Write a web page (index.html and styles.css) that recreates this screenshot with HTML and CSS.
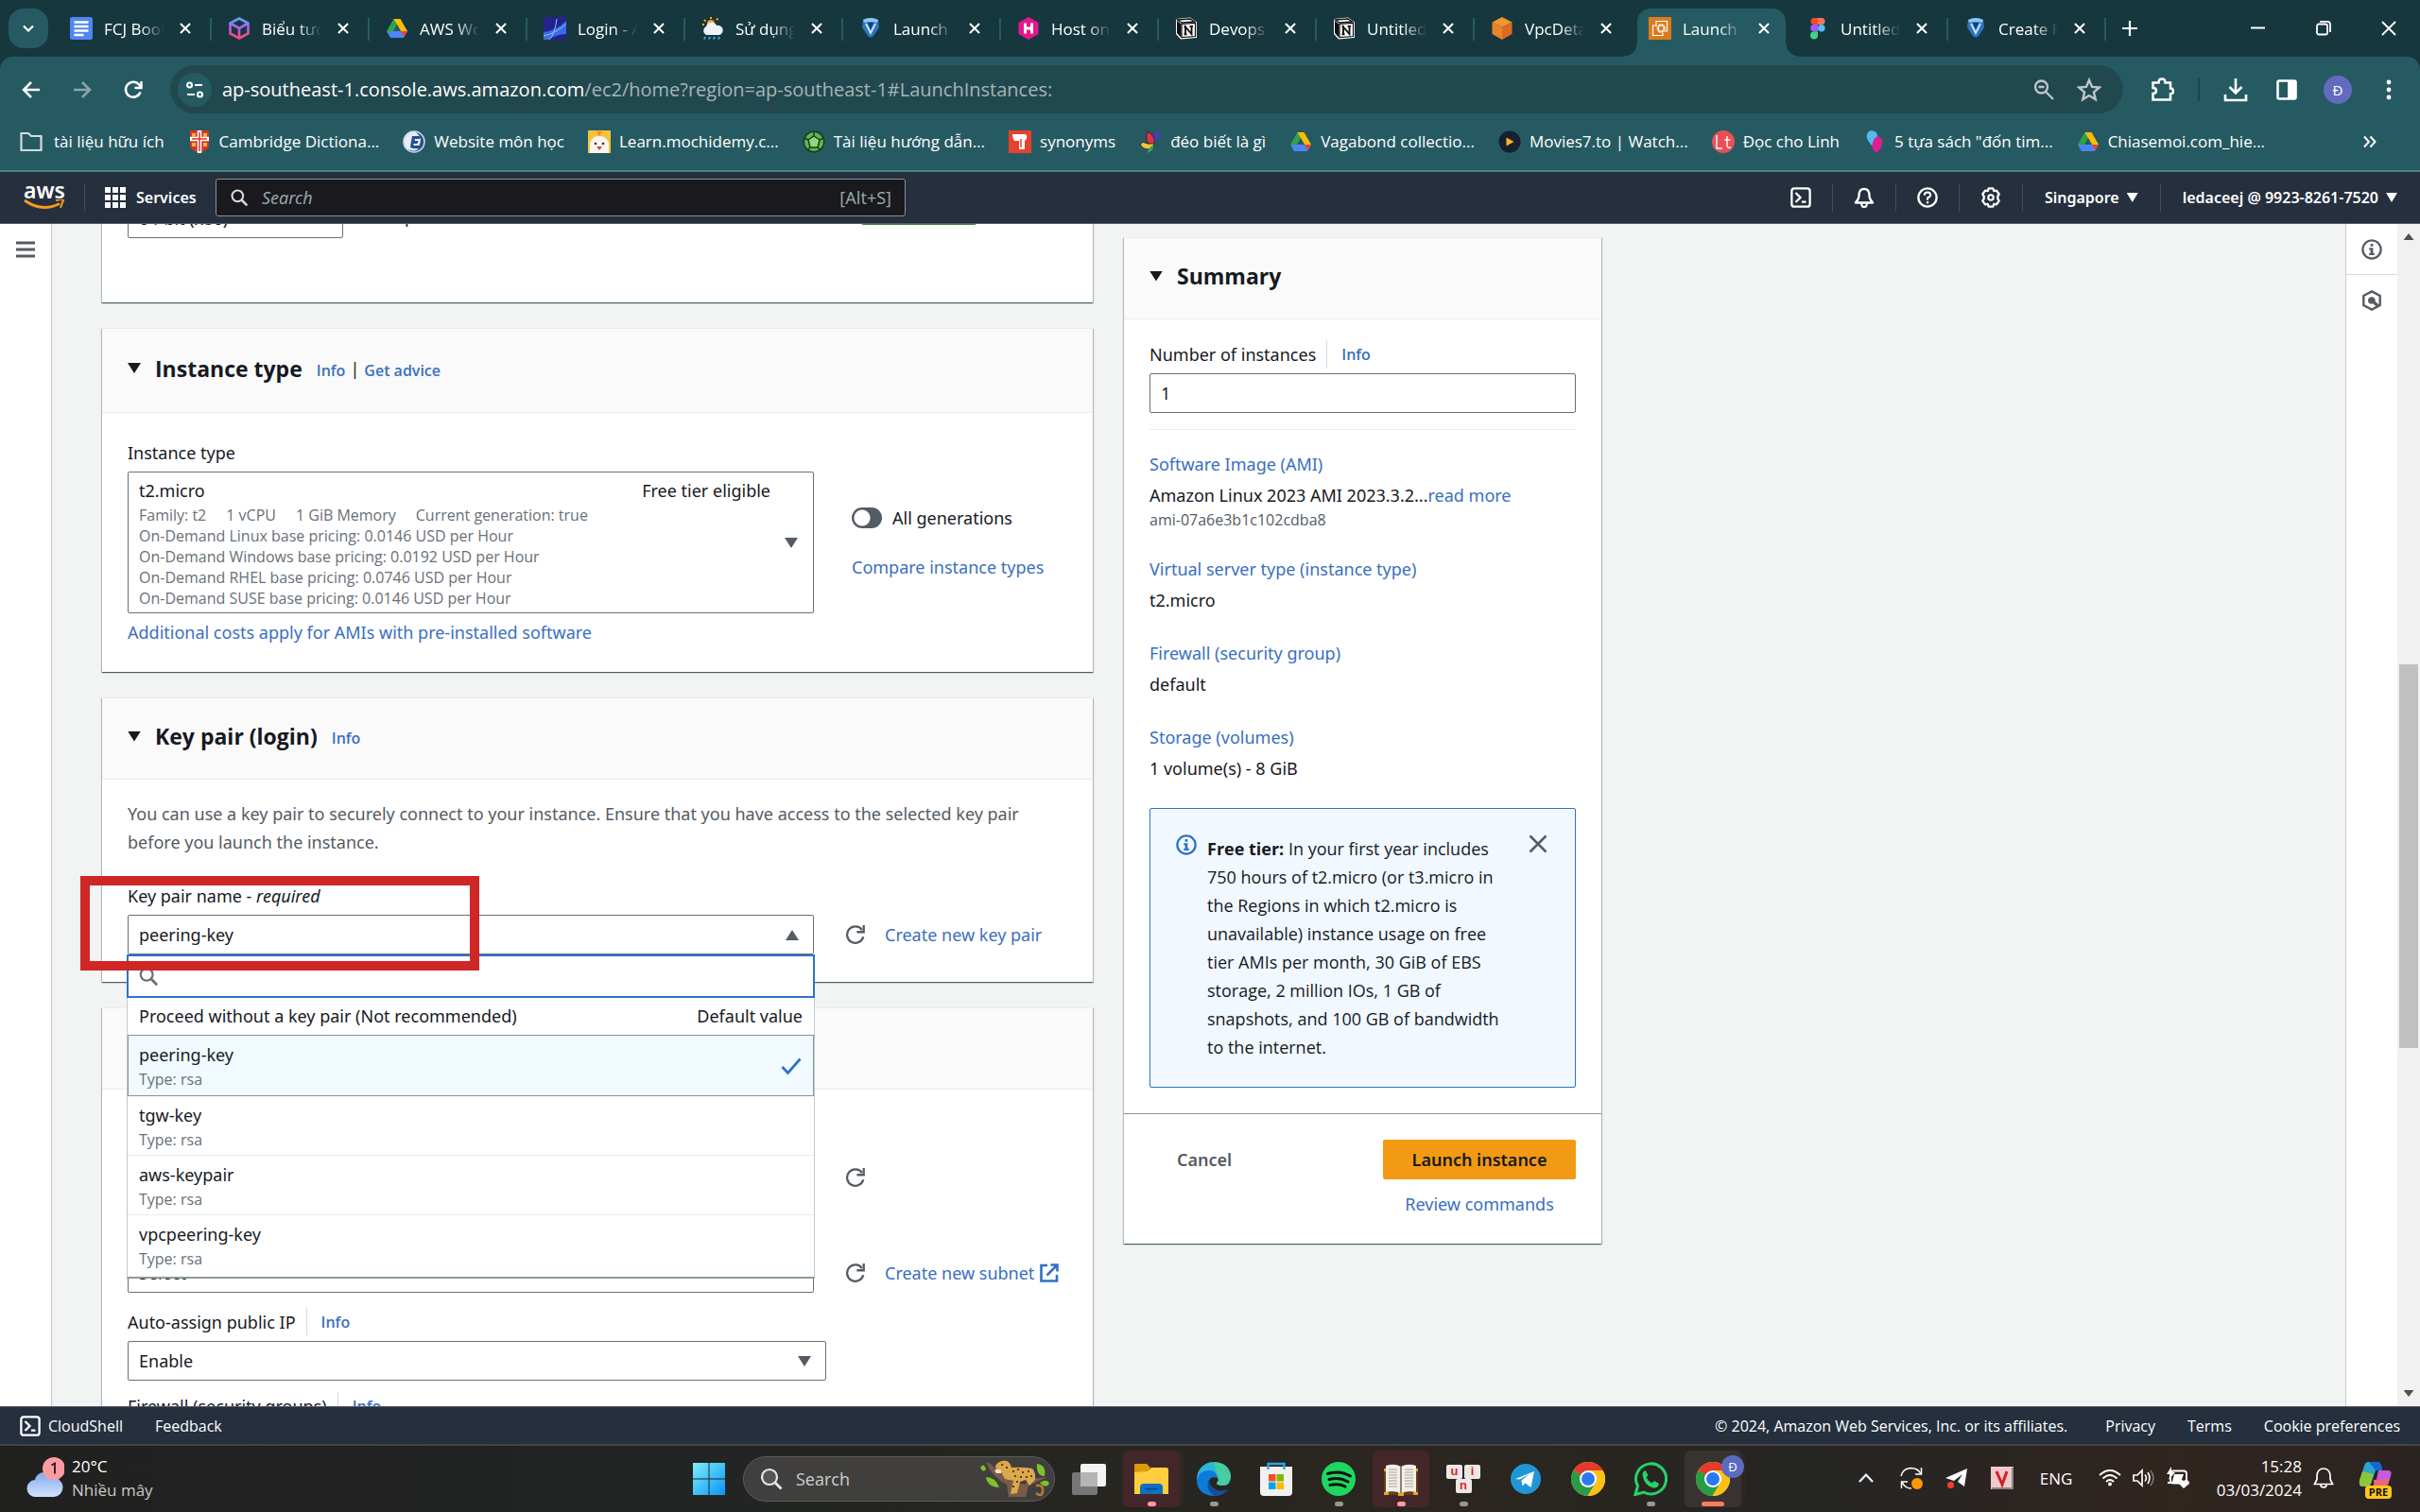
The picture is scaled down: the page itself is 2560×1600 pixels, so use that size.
FILE: index.html
```html
<!DOCTYPE html>
<html lang="en">
<head>
<meta charset="utf-8">
<title>Launch an instance | EC2</title>
<link rel="stylesheet" href="styles.css">
</head>
<body>
<svg class="sprite" aria-hidden="true">
  <symbol id="x" viewBox="0 0 24 24"><path d="M6.500 6.500l11 11m0-11l-11 11" stroke="currentColor" stroke-width="2.200" fill="none"/></symbol>
  <symbol id="glass" viewBox="0 0 24 24"><circle cx="10" cy="10" r="7" fill="none" stroke="currentColor" stroke-width="2.500"/><path d="M15 15l7 7" stroke="currentColor" stroke-width="3"/></symbol>
  <symbol id="refresh" viewBox="0 0 24 24"><path d="M21 14.500A9.500 9.500 0 1 1 19.500 6.500" fill="none" stroke="currentColor" stroke-width="2.500"/><path d="M21.500 1v8h-8" fill="none" stroke="currentColor" stroke-width="2.500"/></symbol>
  <symbol id="info" viewBox="0 0 24 24"><circle cx="12" cy="12" r="10.500" fill="none" stroke="currentColor" stroke-width="2.500"/><path d="M10.500 5.500h3v3h-3zM9 10h4.500v6H15v2.500H9V16h1.500v-3.500H9z" fill="currentColor"/></symbol>
  <symbol id="shell" viewBox="0 0 24 24"><rect x="1.500" y="1.500" width="21" height="21" rx="3" fill="none" stroke="currentColor" stroke-width="2.500"/><path d="M6 6.500l5.500 5.500L6 17.500M13 17h5" fill="none" stroke="currentColor" stroke-width="2.500"/></symbol>
  <symbol id="drive" viewBox="0 0 24 24"><path d="M8.500 2h7L12 8 5 21 1 15z" fill="#2fa24c"/><path d="M8.500 2h7L23 15h-7z" fill="#fbbc05"/><path d="M5 15h18l-4 7H5l-3.500-6z" fill="#4a86f7"/><path d="M16 15h7l-3.500 6z" fill="#e94235"/><path d="M12 8.500L15.500 15h-7z" fill="#25595f"/></symbol>
  <symbol id="vcube" viewBox="0 0 24 24"><path d="M4 3q8-4 16 0l1 8-6 9q-3 3-6 0L3 11z" fill="#2f74bd"/><path d="M4 3q8-4 16 0l-1 3q-7-2-14 0z" fill="#8cc7f5"/><path d="M7 7l5 10 5-10" fill="none" stroke="#cfe8ff" stroke-width="1.800"/><path d="M9 6l3 7 3-7z" fill="#153f78"/></symbol>
  <symbol id="notion" viewBox="0 0 24 24"><path d="M1 2l15-1.500 7 5V22L6 23.500 1 18z" fill="#fff"/><path d="M2.500 3L16 2l4.500 3L7 6z" fill="#fff" stroke="#111" stroke-width="1.300"/><path d="M2 4l4.500 3.500V22L2 17z" fill="#111"/><path d="M7 7.300L21.500 6.300V20.500L7 21.500z" fill="#fff" stroke="#111" stroke-width="1.200"/><path d="M11 18v-7.500l6.500 7.500v-8M9.500 10.300h2.500M15.500 9.900h3.500M9.500 18.300h3" fill="none" stroke="#111" stroke-width="1.900"/></symbol>
  <symbol id="chrome" viewBox="0 0 36 36"><circle cx="18" cy="18" r="18" fill="#fbc116"/><path d="M18 18L2.400 9A18 18 0 0 1 33.600 9z" fill="#e33b2e"/><path d="M18 18L2.400 9A18 18 0 0 0 17.500 36L26 22z" fill="#2a9b48"/><path d="M18 9h15.600A18 18 0 0 1 17.500 36L26 22z" fill="#fbc116"/><circle cx="18" cy="18" r="9" fill="#fff"/><circle cx="18" cy="18" r="7" fill="#2b79ee"/></symbol>
</svg>

<header class="browser">
  <div class="tabstrip">
    <button class="tab-search" aria-label="Search tabs"><svg width="14" height="14" viewBox="0 0 14 14"><path d="M2 4.500l5 5 5-5" fill="none" stroke="#fff" stroke-width="2.200"/></svg></button>
    <nav class="tabs" aria-label="Tabs">
      <div class="tab"><svg class="fav" viewBox="0 0 24 24"><rect width="24" height="24" rx="2.500" fill="#5086f2"/><path d="M4.500 5.500h15M4.500 10h15M4.500 14.500h15M4.500 19h10" stroke="#fff" stroke-width="2.400"/></svg><span class="tab-title">FCJ Book</span><button class="tab-x" aria-label="Close"><svg class="i22"><use href="#x"/></svg></button></div>
      <div class="tab"><svg class="fav" viewBox="0 0 24 24"><defs><linearGradient id="hx" x1="0" y1="0" x2="0" y2="1"><stop offset="0" stop-color="#56a8ff"/><stop offset=".5" stop-color="#b65be8"/><stop offset="1" stop-color="#ff4a6d"/></linearGradient></defs><path d="M12 1.500l9.500 5v11L12 22.500l-9.500-5v-11zM2.500 6.500L12 12l9.500-5.500M12 12v10.500" fill="none" stroke="url(#hx)" stroke-width="2.600"/></svg><span class="tab-title">Biểu tượng</span><button class="tab-x" aria-label="Close"><svg class="i22"><use href="#x"/></svg></button></div>
      <div class="tab"><svg class="fav"><use href="#drive"/></svg><span class="tab-title">AWS Work</span><button class="tab-x" aria-label="Close"><svg class="i22"><use href="#x"/></svg></button></div>
      <div class="tab"><svg class="fav" viewBox="0 0 24 24"><path d="M0 0h24v24H0z" fill="#24228c"/><path d="M0 16Q14 14 24 4v14Q14 18 5 24H0z" fill="#3c6be0"/><path d="M0 20Q14 17 24 7M6 24Q12 18 14 2" fill="none" stroke="#8fc3ff" stroke-width="1"/></svg><span class="tab-title">Login - A</span><button class="tab-x" aria-label="Close"><svg class="i22"><use href="#x"/></svg></button></div>
      <div class="tab"><svg class="fav" viewBox="0 0 24 24"><circle cx="10" cy="7" r="4" fill="#f7a928"/><path d="M10 0v2M3 3l1.500 1.500M1 8h2M16 3l1.500-1.500" stroke="#f7a928" stroke-width="2"/><path d="M5 19a5 5 0 0 1 0-9 6 6 0 0 1 11-1 5 5 0 0 1 3 10z" fill="#eef3f8"/><path d="M4 21l-1 2.500M9 21l-1 2.500M14 21l-1 2.500M19 21l-1 2.500" stroke="#4ba3f0" stroke-width="2"/></svg><span class="tab-title">Sử dụng</span><button class="tab-x" aria-label="Close"><svg class="i22"><use href="#x"/></svg></button></div>
      <div class="tab"><svg class="fav"><use href="#vcube"/></svg><span class="tab-title">Launch a</span><button class="tab-x" aria-label="Close"><svg class="i22"><use href="#x"/></svg></button></div>
      <div class="tab"><svg class="fav" viewBox="0 0 24 24"><path d="M12 0l10.500 6v12L12 24 1.500 18V6z" fill="#e6168b"/><path d="M8.500 6.500v11M15.500 6.500v11M8.500 12h7" stroke="#fff" stroke-width="2.800"/></svg><span class="tab-title">Host on A</span><button class="tab-x" aria-label="Close"><svg class="i22"><use href="#x"/></svg></button></div>
      <div class="tab"><svg class="fav"><use href="#notion"/></svg><span class="tab-title">Devops 1</span><button class="tab-x" aria-label="Close"><svg class="i22"><use href="#x"/></svg></button></div>
      <div class="tab"><svg class="fav"><use href="#notion"/></svg><span class="tab-title">Untitled</span><button class="tab-x" aria-label="Close"><svg class="i22"><use href="#x"/></svg></button></div>
      <div class="tab no-sep"><svg class="fav" viewBox="0 0 24 24"><path d="M12 0l10.500 5.500L12 11 1.500 5.500z" fill="#f0962e"/><path d="M1.500 5.500L12 11v13L1.500 18z" fill="#e9842a"/><path d="M22.500 5.500L12 11v13l10.500-6z" fill="#dc6a22"/></svg><span class="tab-title">VpcDetail</span><button class="tab-x" aria-label="Close"><svg class="i22"><use href="#x"/></svg></button></div>
      <div class="tab active"><svg class="fav" viewBox="0 0 24 24"><path d="M0 0h24v24H0z" fill="#dd7a1c"/><rect x="10.500" y="9" width="5.500" height="6" fill="none" stroke="#fff" stroke-width="1.200"/><path d="M12 7v2M14.500 7v2M12 15v2M14.500 15v2M8.500 11h2M8.500 13h2M16 11h2M16 13h2M8 10V4.500h11.500V15H17M8 9H4.500v10.500H15V17" fill="none" stroke="#fff" stroke-width="1.200"/></svg><span class="tab-title">Launch a</span><button class="tab-x" aria-label="Close"><svg class="i22"><use href="#x"/></svg></button></div>
      <div class="tab"><svg class="fav" viewBox="0 0 24 24"><path d="M8 1h4v7H8a3.500 3.500 0 0 1 0-7z" fill="#f24e1e"/><path d="M12 1h4a3.500 3.500 0 0 1 0 7h-4z" fill="#ff7262"/><path d="M8 8h4v7.500H8A3.700 3.700 0 0 1 8 8z" fill="#a259ff"/><circle cx="15.800" cy="11.700" r="3.800" fill="#5cb8f5"/><path d="M8 15.500h4v4a4 4 0 1 1-4-4z" fill="#43d184"/></svg><span class="tab-title">Untitled</span><button class="tab-x" aria-label="Close"><svg class="i22"><use href="#x"/></svg></button></div>
      <div class="tab"><svg class="fav"><use href="#vcube"/></svg><span class="tab-title">Create P</span><button class="tab-x" aria-label="Close"><svg class="i22"><use href="#x"/></svg></button></div>
    </nav>
    <button class="new-tab" aria-label="New tab"><svg width="18" height="18" viewBox="0 0 18 18"><path d="M9 1v16M1 9h16" stroke="#fff" stroke-width="2.200"/></svg></button>
    <div class="win-controls">
      <button aria-label="Minimize"><svg width="18" height="18" viewBox="0 0 18 18"><path d="M1 8.500h15" stroke="#fff" stroke-width="2"/></svg></button>
      <button aria-label="Restore"><svg width="18" height="18" viewBox="0 0 18 18"><rect x="2" y="4.500" width="11" height="11" rx="2" fill="none" stroke="#fff" stroke-width="1.800"/><path d="M5 1.800h8q3 0 3 3V13" fill="none" stroke="#fff" stroke-width="1.800"/></svg></button>
      <button aria-label="Close window"><svg width="18" height="18" viewBox="0 0 18 18"><path d="M2 2l14 14M16 2L2 16" stroke="#fff" stroke-width="1.800"/></svg></button>
    </div>
  </div>

  <div class="toolbar">
    <div class="nav-buttons">
      <button aria-label="Back"><svg class="i24" viewBox="0 0 24 24"><path d="M21 12H4M12 4l-8 8 8 8" fill="none" stroke="#fff" stroke-width="2.500"/></svg></button>
      <button aria-label="Forward"><svg class="i24" viewBox="0 0 24 24"><path d="M3 12h17M12 4l8 8-8 8" fill="none" stroke="#8aa5a9" stroke-width="2.500"/></svg></button>
      <button aria-label="Reload"><svg class="i24" viewBox="0 0 24 24"><path d="M19.500 14.500A8 8 0 1 1 18 6.500L20 9" fill="none" stroke="#fff" stroke-width="2.500"/><path d="M20.500 3v7h-7" fill="none" stroke="#fff" stroke-width="2.500"/></svg></button>
    </div>
    <div class="omnibox">
      <span class="site-info"><svg width="20" height="20" viewBox="0 0 20 20"><g fill="none" stroke="#fff" stroke-width="2.200"><circle cx="4.500" cy="5" r="2.500"/><path d="M10 5h8M2 15h8"/><circle cx="15.500" cy="15" r="2.500"/></g></svg></span>
      <a class="url" href="#"><b>ap-southeast-1.console.aws.amazon.com</b>/ec2/home?region=ap-southeast-1#LaunchInstances:</a>
      <svg class="i24" viewBox="0 0 24 24"><g fill="none" stroke="#bfc7c8" stroke-width="2.300"><circle cx="9.500" cy="9" r="6.500"/><path d="M14 14l8 8M6.500 9h6"/></g></svg>
      <svg class="star" viewBox="0 0 24 24"><path d="M12 2.500l2.800 6.600 7.200.6-5.500 4.700 1.700 7-6.200-3.800-6.200 3.800 1.700-7L2 9.700l7.200-.6z" fill="none" stroke="#bfc7c8" stroke-width="2.200"/></svg>
    </div>
    <button class="ext" aria-label="Extensions"><svg class="i26" viewBox="0 0 26 26"><path d="M3.500 5.500h6q0-4 3.500-4t3.500 4h5.500v6q3 0 3 3t-3 3v6h-18.500v-6.500q3.500 0 3.500-3t-3.500-3z" fill="none" stroke="#fff" stroke-width="2.500"/></svg></button>
    <span class="tool-sep"></span>
    <button class="dl" aria-label="Downloads"><svg class="i26" viewBox="0 0 26 26"><path d="M13 1v15M6.500 10l6.500 6.500 6.500-6.500M2 18v6h22v-6" fill="none" stroke="#fff" stroke-width="2.600"/></svg></button>
    <button class="sp" aria-label="Side panel"><svg class="i26" viewBox="0 0 26 26"><rect x="3.500" y="3.500" width="19" height="19" rx="1.500" fill="none" stroke="#fff" stroke-width="2.600"/><path d="M14 3h9v20h-9z" fill="#fff"/></svg></button>
    <button class="avatar" aria-label="Profile">Đ</button>
    <button class="more" aria-label="Menu"><svg width="6" height="24" viewBox="0 0 6 24"><g fill="#fff"><circle cx="3" cy="4" r="2.400"/><circle cx="3" cy="12" r="2.400"/><circle cx="3" cy="20" r="2.400"/></g></svg></button>
  </div>

  <nav class="bookmarks" aria-label="Bookmarks">
    <a href="#"><svg class="i24" viewBox="0 0 24 24"><path d="M1.500 3h7.500l3 3h10.500v15h-21z" fill="none" stroke="#d2dcdd" stroke-width="2.200"/></svg>tài liệu hữu ích</a>
    <a href="#"><svg class="i24" viewBox="0 0 24 24"><path d="M2 0h20v15q0 6-10 9Q2 21 2 15z" fill="#d8342b"/><path d="M12 0v24M2 9h20" stroke="#fff" stroke-width="4.500"/><path d="M12 2v20M4 9h16" stroke="#d8342b" stroke-width="1.500"/><path d="M4 3h4v4H4zM16 3h4v4h-4zM4 13h4v4H4zM16 13h4v4h-4z" fill="#f3b63a"/></svg>Cambridge Dictiona...</a>
    <a href="#"><svg class="i24" viewBox="0 0 24 24"><circle cx="12" cy="12" r="11" fill="#e6edf6"/><path d="M12 1a11 11 0 1 1-8 18.500Q14 24 17 19 8 20 8 17L10 6h9l-1 3h-5l-.5 2h4l-1 3h-4v2h6Q22 6 12 1z" fill="#24508f"/><circle cx="12" cy="12" r="11" fill="none" stroke="#c9d8ea" stroke-width="1.500"/></svg>Website môn học</a>
    <a href="#"><svg class="i24" viewBox="0 0 24 24"><path d="M0 0h24v24H0z" fill="#f6c33b"/><path d="M2 24V14q2-8 10-8t10 8v10z" fill="#fdf6ee"/><circle cx="8" cy="14" r="1.300" fill="#3a2a20"/><circle cx="16" cy="14" r="1.300" fill="#3a2a20"/><path d="M9 17h6l-3 4z" fill="#c94d3c"/><path d="M9 1h6l-3 5z" fill="#ef8b2c"/></svg>Learn.mochidemy.c...</a>
    <a href="#"><svg class="i24" viewBox="0 0 24 24"><circle cx="12" cy="12" r="11.500" fill="#1d3b1c"/><circle cx="12" cy="12" r="10" fill="#58b94c"/><path d="M12 6l6 4-2 8H8l-2-8z" fill="#93d785" stroke="#1d3b1c" stroke-width="1.500"/><path d="M12 6V2M18 10l4-2M16 18l3 3M8 18l-3 3M6 10L2 8" stroke="#1d3b1c" stroke-width="1.500"/></svg>Tài liệu hướng dẫn...</a>
    <a href="#"><svg class="i24" viewBox="0 0 24 24"><path d="M0 0h24v24H0z" fill="#e5432d"/><path d="M4 4h14q3 4-1 7v9h-6v-9H6q-2-3-2-7z" fill="#fff"/><path d="M13 9v9" stroke="#e5432d" stroke-width="1.500"/></svg>synonyms</a>
    <a href="#"><svg class="i24" viewBox="0 0 24 24"><path d="M23 1q-2 9-6 11l-4-1q0-7 4-8z" fill="#493cb8"/><path d="M9 1q9 5 7 14l-4 1Q5 10 9 1z" fill="#df3340" stroke="#2b2b2b"/><path d="M1 14q3-3 8 0l7 0q0 5-6 6-7 0-9-6z" fill="#f4c23a" stroke="#2b2b2b"/><path d="M15 15q2 5-6 9 0-5 6-9z" fill="#35a35a"/></svg>đéo biết là gì</a>
    <a href="#"><svg class="i24"><use href="#drive"/></svg>Vagabond collectio...</a>
    <a href="#"><svg class="i24" viewBox="0 0 24 24"><circle cx="12" cy="12" r="11.500" fill="#16202e"/><path d="M8.500 7.500l8 4.500-8 4.500z" fill="#f6b81f"/></svg>Movies7.to | Watch...</a>
    <a href="#"><svg class="i24" viewBox="0 0 24 24"><circle cx="12" cy="12" r="12" fill="#ea4f55"/><path d="M5 5v14h6M16 6v10q0 3 4 2M13.500 10h6" fill="none" stroke="#fff" stroke-width="1.400"/></svg>Đọc cho Linh</a>
    <a href="#"><svg class="i24" viewBox="0 0 24 24"><path d="M9 0q7 1 6 8t-6 8Q2 8 4 4t5-4z" fill="#55b8ec"/><path d="M16 6q6 3 4 9t-6 9q-6-5-4-11t6-7z" fill="#dd1d92"/></svg>5 tựa sách "đốn tim...</a>
    <a href="#"><svg class="i24"><use href="#drive"/></svg>Chiasemoi.com_hie...</a>
    <button class="overflow" aria-label="More bookmarks"><svg width="16" height="16" viewBox="0 0 16 16"><path d="M2 2.500l5 5.500-5 5.500M8.500 2.500l5 5.500-5 5.500" fill="none" stroke="#fff" stroke-width="2"/></svg></button>
  </nav>
</header>

<header class="aws-nav">
  <a class="aws-logo" href="#" aria-label="AWS"><span>aws</span><svg width="44" height="12" viewBox="0 0 44 12"><path d="M1 1q18 13 37 3.500" fill="none" stroke="#f79b1b" stroke-width="3"/><path d="M34 1q9-2 8 0t-3 8" fill="none" stroke="#f79b1b" stroke-width="2"/></svg></a>
  <button class="services"><svg class="i22" viewBox="0 0 22 22"><path d="M0 0h6v6H0zM8 0h6v6H8zM16 0h6v6h-6zM0 8h6v6H0zM8 8h6v6H8zM16 8h6v6h-6zM0 16h6v6H0zM8 16h6v6H8zM16 16h6v6h-6z" fill="#fff"/></svg>Services</button>
  <label class="aws-search"><svg class="i20"><use href="#glass"/></svg><input type="search" placeholder="Search" aria-label="Search"><span>[Alt+S]</span></label>
  <div class="aws-tools">
    <button class="tool" aria-label="CloudShell"><svg class="i22"><use href="#shell"/></svg></button>
    <button class="tool" aria-label="Notifications"><svg class="i22" viewBox="0 0 24 24"><path d="M2 18q4-4 4-8 0-8 6-8t6 8q0 4 4 8z" fill="none" stroke="#fff" stroke-width="2.500" stroke-linejoin="round"/><path d="M9 18v2q0 3 3 3t3-3v-2" fill="none" stroke="#fff" stroke-width="2.300"/></svg></button>
    <button class="tool" aria-label="Help"><svg class="i22" viewBox="0 0 24 24"><circle cx="12" cy="12" r="10.500" fill="none" stroke="#fff" stroke-width="2.500"/><path d="M8.500 9.500q0-3.500 3.500-3.500t3.500 3q0 2-3.500 3.500V15" fill="none" stroke="#fff" stroke-width="2.300"/><path d="M10.800 16.500h2.500V19h-2.500z" fill="#fff"/></svg></button>
    <button class="tool" aria-label="Settings"><svg class="i22" viewBox="0 0 24 24"><path d="M9.500 1.500h5l1 3 3-.5 3 4-1.500 2.500v3l1.500 2.500-3 4-3-.5-1 3h-5l-1-3-3 .5-3-4L4 13.500v-3L2.500 8l3-4 3 .5z" fill="none" stroke="#fff" stroke-width="2.500" stroke-linejoin="round"/><circle cx="12" cy="12" r="3" fill="none" stroke="#fff" stroke-width="2.300"/></svg></button>
    <button class="menu">Singapore<i class="tri white"></i></button>
    <button class="menu account">ledaceej @ 9923-8261-7520<i class="tri white"></i></button>
  </div>
</header>

<main class="console">
  <aside class="rail left"><button aria-label="Open menu"><svg width="20" height="18" viewBox="0 0 20 18"><path d="M0 2h20M0 9h20M0 16h20" stroke="#545b64" stroke-width="3"/></svg></button></aside>

  <div class="content">
    <div class="forms">
      <section class="panel arch">
        <div class="select arch-select"><select aria-label="Architecture"><option>64-bit (x86)</option></select></div>
        <span class="boot">uefi-preferred</span>
        <span class="verified"></span>
      </section>

      <section class="panel">
        <header class="panel-head tall"><i class="tri"></i><h2>Instance type</h2><a class="info" href="#">Info</a><span class="bar">|</span><a class="info" href="#">Get advice</a></header>
        <div class="panel-body type-body">
          <div class="type-field">
            <span class="label" id="type-label">Instance type</span>
            <button class="type-select" aria-labelledby="type-label">
              <span class="type-main"><span>t2.micro</span><span>Free tier eligible</span></span>
              <span class="type-tags"><span>Family: t2</span><span>1 vCPU</span><span>1 GiB Memory</span><span>Current generation: true</span></span>
              <span class="small">On-Demand Linux base pricing: 0.0146 USD per Hour</span>
              <span class="small">On-Demand Windows base pricing: 0.0192 USD per Hour</span>
              <span class="small">On-Demand RHEL base pricing: 0.0746 USD per Hour</span>
              <span class="small">On-Demand SUSE base pricing: 0.0146 USD per Hour</span>
              <i class="tri grey"></i>
            </button>
            <a class="link" href="#">Additional costs apply for AMIs with pre-installed software</a>
          </div>
          <div class="type-side">
            <label class="toggle"><input type="checkbox">All generations</label>
            <a class="link" href="#">Compare instance types</a>
          </div>
        </div>
      </section>

      <section class="panel">
        <header class="panel-head"><i class="tri"></i><h2>Key pair (login)</h2><a class="info" href="#">Info</a></header>
        <div class="panel-body key-body">
          <p class="desc">You can use a key pair to securely connect to your instance. Ensure that you have access to the selected key pair before you launch the instance.</p>
          <label class="label" for="keypair">Key pair name - <em>required</em></label>
          <div class="row">
            <div class="select open">
              <select id="keypair"><option>peering-key</option></select>
              <div class="dropdown">
                <label class="filter"><svg class="i22"><use href="#glass"/></svg><input type="text" aria-label="Filter key pairs"></label>
                <ul>
                  <li class="none"><span>Proceed without a key pair (Not recommended)</span><span>Default value</span></li>
                  <li class="chosen"><span>peering-key</span><span class="small">Type: rsa</span><svg class="check" viewBox="0 0 22 22"><path d="M1.500 12l6 6.500L20.500 3.500" fill="none" stroke="#2f72c4" stroke-width="2.800"/></svg></li>
                  <li><span>tgw-key</span><span class="small">Type: rsa</span></li>
                  <li><span>aws-keypair</span><span class="small">Type: rsa</span></li>
                  <li><span>vpcpeering-key</span><span class="small">Type: rsa</span></li>
                </ul>
              </div>
              <div class="callout"></div>
            </div>
            <button class="reload" aria-label="Refresh key pairs"><svg class="i22"><use href="#refresh"/></svg></button>
            <a class="link" href="#">Create new key pair</a>
          </div>
        </div>
      </section>

      <section class="panel">
        <header class="panel-head"></header>
        <div class="panel-body net-body">
          <div class="row">
            <div class="select"><select aria-label="VPC"><option>Select</option></select></div>
            <button class="reload" aria-label="Refresh VPCs"><svg class="i22"><use href="#refresh"/></svg></button>
          </div>
          <div class="row subnet">
            <div class="select"><select aria-label="Subnet"><option>Select</option></select></div>
            <button class="reload" aria-label="Refresh subnets"><svg class="i22"><use href="#refresh"/></svg></button>
            <a class="link ext-link" href="#">Create new subnet<svg class="i20" viewBox="0 0 20 20"><path d="M8 2H1.500v16.500H18V12M11.500 1.500h7v7M18 2L7.500 12.500" fill="none" stroke="#2f72c4" stroke-width="2.600"/></svg></a>
          </div>
          <div class="label-row"><label class="label" for="autoip">Auto-assign public IP</label><a class="info" href="#">Info</a></div>
          <div class="select wide"><select id="autoip"><option>Enable</option></select></div>
          <div class="label-row firewall"><span class="label">Firewall (security groups)</span><a class="info" href="#">Info</a></div>
        </div>
      </section>
    </div>

    <section class="panel summary">
      <header class="panel-head"><i class="tri"></i><h2>Summary</h2></header>
      <div class="summary-body">
        <div class="label-row"><label class="label" for="count">Number of instances</label><a class="info" href="#">Info</a></div>
        <input class="count" id="count" type="text" value="1">
        <hr>
        <dl>
          <dt><a class="link" href="#">Software Image (AMI)</a></dt>
          <dd>Amazon Linux 2023 AMI 2023.3.2...<a class="link" href="#">read more</a></dd>
          <dd class="ami">ami-07a6e3b1c102cdba8</dd>
          <dt><a class="link" href="#">Virtual server type (instance type)</a></dt>
          <dd>t2.micro</dd>
          <dt><a class="link" href="#">Firewall (security group)</a></dt>
          <dd>default</dd>
          <dt><a class="link" href="#">Storage (volumes)</a></dt>
          <dd>1 volume(s) - 8 GiB</dd>
        </dl>
        <div class="alert">
          <svg class="i22 blue"><use href="#info"/></svg>
          <p><b>Free tier:</b> In your first year includes 750 hours of t2.micro (or t3.micro in the Regions in which t2.micro is unavailable) instance usage on free tier AMIs per month, 30 GiB of EBS storage, 2 million IOs, 1 GB of snapshots, and 100 GB of bandwidth to the internet.</p>
          <button aria-label="Dismiss"><svg width="20" height="20" viewBox="0 0 20 20"><path d="M1.500 1.500l17 17m0-17l-17 17" stroke="#545b64" stroke-width="2.500"/></svg></button>
        </div>
      </div>
      <footer class="actions">
        <button class="cancel">Cancel</button>
        <div><button class="launch">Launch instance</button><a class="link" href="#">Review commands</a></div>
      </footer>
    </section>
  </div>

  <aside class="rail right">
    <button aria-label="Info"><svg class="i22"><use href="#info"/></svg></button>
    <button aria-label="Tutorials"><svg class="i22" viewBox="0 0 24 24"><path d="M12 1.500l9.500 5v11l-9.500 5-9.500-5v-11z" fill="none" stroke="#545b64" stroke-width="2.600"/><path d="M12 8a4 4 0 1 0 1.500 7.500l5 5 2.500-3-5-4.500A4 4 0 0 0 12 8z" fill="#545b64"/></svg></button>
  </aside>
  <div class="scrollbar"><i class="arrow up"></i><i class="thumb"></i><i class="arrow down"></i></div>
</main>

<footer class="aws-footer">
  <button><svg class="i22"><use href="#shell"/></svg>CloudShell</button>
  <button class="feedback">Feedback</button>
  <span class="copy">© 2024, Amazon Web Services, Inc. or its affiliates.</span>
  <a href="#">Privacy</a><a href="#">Terms</a><a href="#">Cookie preferences</a>
</footer>

<footer class="taskbar">
  <div class="weather">
    <svg width="40" height="46" viewBox="0 0 40 46"><defs><linearGradient id="cl" x1="0" y1="0" x2="0" y2="1"><stop offset="0" stop-color="#7fa8ee"/><stop offset="1" stop-color="#d4e4ff"/></linearGradient></defs><circle cx="28" cy="20" r="8" fill="#f28a1c"/><path d="M10 43a9 9 0 0 1-1-18 10 10 0 0 1 19-2 10 10 0 0 1 1 20z" fill="url(#cl)"/><circle cx="29" cy="13" r="12" fill="#ff9aa2"/><path d="M26.500 9.500L30 7.500v11" fill="none" stroke="#231a1c" stroke-width="1.800"/></svg>
    <span>20°C<br><small>Nhiều mây</small></span>
  </div>
  <div class="apps">
    <button class="app" aria-label="Start"><svg class="i36" viewBox="0 0 36 36"><defs><linearGradient id="wn" x1="0" y1="0" x2="1" y2="1"><stop offset="0" stop-color="#7defff"/><stop offset="1" stop-color="#0a93f5"/></linearGradient></defs><path d="M1 1h16.500v16.500H1zM18.500 1H35v16.500H18.500zM1 18.500h16.500V35H1zM18.500 18.500H35V35H18.500z" fill="url(#wn)"/></svg></button>
    <label class="task-search"><svg class="i24" viewBox="0 0 24 24"><circle cx="10" cy="10" r="8" fill="#565554" stroke="#e3e8ee" stroke-width="2.200"/><path d="M16 16l6.500 6.500" stroke="#e3e8ee" stroke-width="2.800"/></svg><input type="search" placeholder="Search" aria-label="Search Windows"><svg width="76" height="40" viewBox="0 0 76 40"><path d="M8 2q6 16 22 24l2 13h18l3-12 20-9-18 2-6 6-8-2q-14-4-28-20z" fill="#7a5a48"/><path d="M18 6q4-6 12-5 4 2 5 7 12-1 22 1 4 4 3 12l-6 6-4-6-6 2-3 12-7 1 3-14-9-2-4-7q-6 0-6-7z" fill="#dba94c"/><path d="M24 5h2M29 8h2M36 12h2M41 10h2M46 13h2M52 12h2M38 17h2M44 18h2M50 18h2M55 17h2M40 23h2M36 28h2" stroke="#5e3d19" stroke-width="2"/><path d="M17 11q4-2 7 0v3h-5z" fill="#f4e6cf"/><path d="M61 27q8-1 7 6t-7 2" fill="none" stroke="#b27d33" stroke-width="2.500"/><path d="M8 18q10 0 14 11-12 0-14-11zM62 4q10 1 8 13-9 0-8-13zM65 24q8-5 10 1-4 6-10-1zM2 8q4-6 6 2-3 4-6-2z" fill="#7cc22f"/></svg></label>
    <button class="app" aria-label="Task view"><svg class="i36" viewBox="0 0 36 36"><rect x="9" y="2" width="27" height="24" rx="2" fill="#f3f3f3"/><rect x="0" y="11" width="27" height="24" rx="2" fill="#777"/><path d="M9 11h18v15H9z" fill="#b5b5b5"/></svg></button>
    <button class="app red multi" aria-label="File Explorer"><svg class="i36" viewBox="0 0 36 36"><path d="M0 3q0-1 1-1h12l4 4-3 6H0z" fill="#d99a0b"/><path d="M0 11l14-1 4-4h16q2 0 2 2v26H0z" fill="#ffce3e"/><path d="M6 34V27q0-4 4-4h16q4 0 4 4v7z" fill="#0f6fc4"/><path d="M11 28.500h14" stroke="#0a4e8f" stroke-width="2"/></svg><i class="dot pink"></i></button>
    <button class="app" aria-label="Edge"><svg class="i36" viewBox="0 0 36 36"><path d="M0 18A18 18 0 0 1 18 0Q34 1 36 15q0 10-9 10-6 0-6-3 3-2 1-6-4-6-12-4-7 2-10 9z" fill="#2cb5d6"/><path d="M18 0q17 1 18 15 0 10-9 10-6 0-6-3 3-2 1-6z" fill="#4fd98a" opacity=".7"/><path d="M0 20Q2 9 13 9q8 0 9 8-9-3-9 5 1 9 13 9 4 0 7-2-6 7-15 7Q1 35 0 20z" fill="#0c7cd8"/><path d="M13 18q-5 12 6 18 9-1 14-7-9 4-15-1-5-4-5-10z" fill="#134f9e"/></svg><i class="dot"></i></button>
    <button class="app" aria-label="Store"><svg class="i36" viewBox="0 0 36 36"><path d="M1 5h34v27q0 4-4 4H5q-4 0-4-4z" fill="#f1f1f2"/><path d="M9.500 8V2h17v6" fill="none" stroke="#27a8ea" stroke-width="2.400"/><path d="M10 13h7.500v7.500H10z" fill="#f25022"/><path d="M18.500 13H26v7.500h-7.500z" fill="#7fba00"/><path d="M10 21.500h7.500V29H10z" fill="#00a4ef"/><path d="M18.500 21.500H26V29h-7.500z" fill="#ffb900"/></svg></button>
    <button class="app" aria-label="Spotify"><svg class="i36" viewBox="0 0 36 36"><circle cx="18" cy="18" r="18" fill="#1ed760"/><path d="M6.500 12.500q13-4 24 2.500M8 18.500q11-3 20 2.500M9 24.500q9-2 16 1.500" fill="none" stroke="#111" stroke-width="3" stroke-linecap="round"/></svg><i class="dot"></i></button>
    <button class="app red" aria-label="Reader"><svg class="i36" viewBox="0 0 36 36"><path d="M0 7h5v25h26V7h5v28H0z" fill="#6d3d12"/><path d="M0 7h3v3H0zM33 7h3v3h-3zM0 32h5v3H0zM31 32h5v3h-5zM15 32h6v4h-6z" fill="#e0a722"/><path d="M2 4q9-3 16 1v28q-7-3-16-1zM34 4q-9-3-16 1v28q7-3 16-1z" fill="#f2eee8"/><path d="M5 8h9M5 11h9M5 14h9M5 17h9M5 20h9M5 23h9M5 26h9M22 8h9M22 11h9M22 14h9M22 17h9M22 20h9M22 23h9M22 26h9" stroke="#aaa39b"/><path d="M18 5v28" stroke="#8a8178" stroke-width="2"/></svg><i class="dot pink"></i></button>
    <button class="app" aria-label="UniKey"><span class="keys"><i>u</i><i>i</i><i>n</i></span><i class="dot"></i></button>
    <button class="app" aria-label="Telegram"><svg class="i36" viewBox="0 0 36 36"><circle cx="18" cy="18" r="16" fill="#2096d6"/><path d="M7 18l20-8-3.500 17-6-4.500-3 3-1-6 9-7-11 6z" fill="#fff"/></svg></button>
    <button class="app" aria-label="Chrome"><svg class="i36"><use href="#chrome"/></svg></button>
    <button class="app" aria-label="WhatsApp"><svg class="i36" viewBox="0 0 36 36"><path d="M2 34.500l2.500-9A16 16 0 1 1 11 32z" fill="none" stroke="#25d366" stroke-width="3"/><path d="M12.500 9l3 5-2 2.500q2 4 6 6l2.500-2.500 5 3q-1 5-6 4.500Q11 25 9.500 13.500 9.500 10 12.500 9z" fill="#25d366"/></svg><i class="dot"></i></button>
    <button class="app current multi" aria-label="Chrome profile"><svg class="i36"><use href="#chrome"/></svg><i class="profile">Đ</i><i class="dot wide-dot"></i></button>
  </div>
  <div class="tray">
    <svg class="i24" viewBox="0 0 24 24"><path d="M5 16l7-7.500 7 7.500" fill="none" stroke="#fff" stroke-width="2.200"/></svg>
    <svg class="i24" viewBox="0 0 24 24"><path d="M1 10Q3 2 11 1.500q8 0 11 6M22.500 1v7H16M1.500 23v-7H8M2 16q3 7 10 7" fill="none" stroke="#fff" stroke-width="1.500"/><circle cx="18" cy="18" r="6" fill="#ff9800"/></svg>
    <svg class="i24" viewBox="0 0 24 24"><path d="M0 12L23 2l-3 19-7-5 5-8-9 7z" fill="#fff"/><circle cx="5.500" cy="19.500" r="3.500" fill="#f33c38"/></svg>
    <svg class="i24" viewBox="0 0 24 24"><path d="M0 0h24v24H0z" fill="#f2c9ca"/><path d="M23 1v22H1" fill="none" stroke="#888" stroke-width="2"/><path d="M6 5l6 14 5-14" fill="none" stroke="#cf1f2b" stroke-width="3"/></svg>
    <span class="lang">ENG</span>
    <div class="quick">
      <svg class="i24" viewBox="0 0 24 24"><g fill="none" stroke="#fff" stroke-width="1.800"><path d="M1 9q11-10 22 0M4.500 12.500q7.500-7 15 0M8 16q4-4 8 0"/></g><circle cx="12" cy="18.500" r="1.900" fill="#fff"/></svg>
      <svg class="i24" viewBox="0 0 24 24"><path d="M1 9h4l5-5v16l-5-5H1z" fill="none" stroke="#fff" stroke-width="1.700"/><path d="M13 8.500q3 3.500 0 7M16 6q4 6 0 12" fill="none" stroke="#fff" stroke-width="1.600"/><path d="M19 4q6 8 0 16" fill="none" stroke="#777" stroke-width="1.600"/></svg>
      <svg class="i24" viewBox="0 0 24 24"><rect x="4" y="4.500" width="17" height="13" rx="3" fill="none" stroke="#fff" stroke-width="1.800"/><path d="M8 8h10l-3 8H6z" fill="#fff"/><path d="M5 0L0 8h4l-2 6 7-8H5z" fill="#fff"/><path d="M1 17h12" stroke="#fff" stroke-width="2"/><path d="M18 23l-5-5q0-4 3-4l2 1 2-1q4 0 4 4z" fill="#fff"/></svg>
    </div>
    <time class="clock">15:28<br>03/03/2024</time>
    <svg class="i24 bell" viewBox="0 0 24 24"><path d="M2.500 18.500l2.500-5V9q1-7 7-7t7 7v4.500l2.500 5zM9 19q0 3 3 3t3-3" fill="none" stroke="#fff" stroke-width="1.700"/></svg>
    <span class="copilot"><svg class="i36" viewBox="0 0 36 36"><path d="M2 22L7 5q1-4 5-4h9q3 0 4 4l1 4h-4q-3 0-4 4l-4 11q-1 3-4 3H5q-4 0-3-5z" fill="#2aa6c8"/><path d="M2 20l3-9 12 3-3 10q-1 3-4 3H5q-4 0-3-7z" fill="#8cc63e"/><path d="M12 1h9q3 0 4 4l1 5h-7z" fill="#1467cf"/><path d="M22 10h10q5 0 3 6l-4 12H15q3 0 4-4z" fill="#c35be3"/><path d="M17 20l17-1-3 9H15q1 0 2-3z" fill="#f0627e"/></svg><i>PRE</i></span>
  </div>
</footer>
</body>
</html>
```
FILE: styles.css
```css
:root {
  --ui: "Open Sans", "Noto Sans", sans-serif;
  --console: "Noto Sans", "Open Sans", sans-serif;
  --link: #3a6fc0;
  --ink: #16191f;
  --line: #eaeded;
  --grey: #545b64;
}
* { box-sizing: border-box; }
body {
  margin: 0;
  height: 100vh;
  display: grid;
  grid-template-rows: auto auto minmax(0, 1fr) auto auto;
  grid-template-columns: minmax(0, 1fr);
  overflow: hidden;
  font: 18px/30px var(--console);
  color: var(--ink);
  background: #f2f3f3;
}
button, input, select { font: inherit; color: inherit; margin: 0; padding: 0; border: 0; background: none; }
button { display: inline-flex; align-items: center; justify-content: center; }
a { text-decoration: none; color: inherit; }
svg { display: block; flex: none; }
i { font-style: normal; }
h2, p, dl, dd, ul { margin: 0; padding: 0; }
.sprite { position: absolute; width: 0; height: 0; }
.i20 { width: 20px; height: 20px; }
.i22 { width: 22px; height: 22px; }
.i24, .fav { width: 24px; height: 24px; }
.i26 { width: 26px; height: 26px; }
.i36 { width: 36px; height: 36px; }

/* browser window */
.browser { background: #17373e; color: #fff; border-bottom: 2px solid #4e8083; font: 17px/24px var(--ui); }
.tabstrip { display: flex; height: 60px; align-items: flex-end; }
.tab-search { width: 42px; height: 42px; margin: 0 6px 9px 9px; border-radius: 16px; background: #265a62; }
.tabs { display: flex; }
.tab { position: relative; width: 167px; height: 51px; padding: 0 17px 9px 17px; display: flex; align-items: center; gap: 12px; }
.tab::after { content: ""; position: absolute; right: 0; top: 10px; width: 2px; height: 24px; background: #265a62; }
.tab.no-sep::after { display: none; }
.tab-title { flex: 1; overflow: hidden; white-space: nowrap; padding-top: 2px; mask-image: linear-gradient(90deg, #000 60%, transparent); }
.tab.active::before { content: ""; position: absolute; inset: 0 5px 0 5px; background: #265a62; border-radius: 14px 14px 0 0; }
.tab.active::after {
  left: -9px; right: -9px; top: auto; bottom: 0; width: auto; height: 14px;
  background:
    radial-gradient(circle at 0 0, transparent 13px, #265a62 14px) left / 14px 14px no-repeat,
    radial-gradient(circle at 100% 0, transparent 13px, #265a62 14px) right / 14px 14px no-repeat;
}
.tab.active > * { position: relative; }
.tab-x { width: 22px; height: 22px; }
.new-tab { width: 36px; height: 36px; margin: 0 0 12px 7px; }
.win-controls { display: flex; margin: 0 0 21px auto; padding-right: 24px; gap: 51px; }

.toolbar { display: flex; align-items: center; height: 60px; padding: 9px 30px 0 21px; background: #265a62; border-radius: 14px 14px 0 0; }
.nav-buttons { display: flex; gap: 30px; }
.omnibox { flex: 1; display: flex; align-items: center; height: 51px; margin: 0 28px 0 27px; padding: 0 23px 0 8px; border-radius: 26px; background: #22484f; }
.site-info { display: grid; place-items: center; width: 36px; height: 36px; border-radius: 50%; background: #265a62; }
.url { flex: 1; margin-left: 11px; font-size: 20px; color: #a3b6b9; }
.url b { font-weight: 400; color: #fff; }
.star { width: 26px; height: 26px; margin-left: 23px; }
.tool-sep { width: 2px; height: 24px; margin: 0 25px; background: #17474f; }
.sp { margin: 0 26px 0 28px; }
.avatar { width: 30px; height: 30px; margin-right: 36px; border-radius: 50%; background: #636bbf; font-size: 15px; }
.more { width: 36px; margin: 0 -15px; }
.bookmarks { display: flex; align-items: center; height: 60px; gap: 25px; padding: 0 45px 0 21px; background: #265a62; white-space: nowrap; }
.bookmarks a { display: flex; align-items: center; gap: 9px; }
.bookmarks a:first-child { gap: 12px; }
.overflow { margin-left: auto; }

/* console header */
.aws-nav { display: flex; align-items: center; height: 55px; background: #252f3e; border-bottom: 1px solid #545b64; color: #fff; font-size: 16px; font-weight: 600; }
.aws-logo { width: 90px; height: 30px; padding-left: 25px; border-right: 1px solid #414b59; font-size: 23px; line-height: 14px; }
.aws-logo svg { margin-top: 3px; }
.services { gap: 11px; margin-left: 21px; width: 97px; justify-content: flex-start; }
.aws-search { display: flex; align-items: center; gap: 14px; width: 730px; height: 40px; margin-left: 20px; padding: 0 14px; border: 1px solid #8d9191; border-radius: 3px; background: #19191e; font-weight: 400; font-size: 18px; color: #d5dbdb; }
.aws-search input { flex: 1; min-width: 0; outline: 0; }
.aws-search input::placeholder { color: #95a5a6; font-style: italic; opacity: 1; }
.aws-search span { color: #95a5a6; }
.aws-tools { display: flex; align-items: center; margin-left: auto; padding-right: 24px; }
.tool { width: 67px; height: 30px; border-right: 1px solid #414b59; }
.menu { height: 30px; gap: 8px; padding: 0 23px; border-right: 1px solid #414b59; white-space: nowrap; }
.menu.account { padding-right: 0; border: 0; }
.tri { width: 14px; height: 11px; flex: none; background: var(--ink); clip-path: polygon(0 0, 100% 0, 50% 100%); }
.tri.white { width: 12px; height: 10px; background: #fff; }
.tri.grey { background: var(--grey); }

/* console body */
.console { display: flex; min-height: 0; overflow: hidden; background: #f2f3f3; }
.rail { width: 55px; background: #fff; flex: none; }
.rail.left { padding: 17px; border-right: 1px solid #c3c9c9; }
.rail.left button { display: flex; height: 20px; }
.rail.right { border-left: 1px solid #c3c9c9; color: var(--grey); }
.rail.right button { display: flex; width: 54px; height: 54px; border-bottom: 1px solid #d5dbdb; }
.rail.right button + button { border: 0; }
.scrollbar { width: 24px; flex: none; background: #f1f1f1; display: flex; flex-direction: column; align-items: center; padding: 10px 0; }
.arrow { width: 11px; height: 7px; background: #505050; clip-path: polygon(50% 0, 100% 100%, 0 100%); }
.arrow.down { clip-path: polygon(0 0, 100% 0, 50% 100%); margin-top: auto; }
.thumb { width: 20px; height: 33%; margin-top: 449px; background: #c1c1c1; }
.content { flex: 1; min-width: 0; display: grid; grid-template-columns: minmax(0, 1048px) minmax(0, 505px); gap: 33px; align-items: start; padding: 0 53px; }
.forms { display: grid; gap: 27px; margin-top: -61px; }
.panel { background: #fff; border-top: 1px solid var(--line); box-shadow: 0 1px 1px rgba(0, 28, 36, .5), 1px 1px 1px rgba(0, 28, 36, .2), -1px 1px 1px rgba(0, 28, 36, .2); }
.panel-head { display: flex; align-items: center; min-height: 86px; padding: 0 27px 5px; background: #fafafa; border-bottom: 1px solid var(--line); }
.panel-head.tall { min-height: 89px; }
h2 { font: 700 23px/30px var(--ui); margin: 0 15px 0 15px; }
.info { font-family: var(--ui); font-size: 16px; font-weight: 600; color: var(--link); }
.panel-head .info { padding-top: 4px; }
.bar { padding: 0 5px; }
.label { display: block; }
.link { color: var(--link); }
.small, .type-tags { font: 16px/22px var(--ui); color: #687078; }
.arch { display: flex; gap: 27px; height: 144px; padding: 33px 27px 0; }
.boot { line-height: 38px; }
.verified { width: 124px; height: 28px; margin: 0 95px 0 auto; background: #3f8624; border-radius: 4px; }
.panel-body { padding: 27px; }
.select { position: relative; width: 726px; height: 42px; flex: none; }
.arch-select { width: 228px; }
.select.wide { width: 739px; }
.select::after { content: ""; position: absolute; right: 16px; top: 16px; width: 14px; height: 11px; background: var(--grey); clip-path: polygon(0 0, 100% 0, 50% 100%); pointer-events: none; }
.select.open::after { clip-path: polygon(50% 0, 100% 100%, 0 100%); }
select, .count { appearance: none; width: 100%; height: 42px; padding: 0 11px; border: 1px solid #687078; border-radius: 2px; background: #fff; }
.type-body { display: flex; gap: 40px; }
.type-field { width: 726px; flex: none; display: grid; gap: 5px; }
.type-select { position: relative; display: flex; flex-direction: column; align-items: stretch; text-align: left; padding: 4px 11px; border: 1px solid #687078; border-radius: 2px; }
.type-main { display: flex; justify-content: space-between; padding-right: 34px; }
.type-tags { display: flex; gap: 21px; }
.type-select .tri { position: absolute; right: 16px; top: 69px; }
.type-side { display: grid; gap: 22px; align-content: start; padding-top: 69px; }
.toggle { display: flex; align-items: center; gap: 11px; }
.toggle input { appearance: none; width: 32px; height: 22px; border-radius: 11px; background: radial-gradient(circle at 11px 50%, #fff 8px, var(--grey) 9px); }
.key-body { padding: 21px 27px 29px; }
.desc { margin-bottom: 27px; color: #545b64; }
.row { display: flex; align-items: center; margin-top: 5px; }
.reload { margin: 0 20px 0 33px; color: var(--grey); }
.dropdown { position: absolute; z-index: 2; left: -1px; right: -1px; top: 42px; background: #fff; border: 1px solid #c3cacb; border-top: 0; border-bottom: 2px solid #8d999b; }
.filter { display: flex; align-items: center; height: 46px; margin: 0 -1px; padding: 0 10px; border: 2px solid #2f72c4; color: #687078; }
.filter input { flex: 1; outline: 0; }
ul { list-style: none; }
li { position: relative; display: grid; grid-template-rows: 30px 22px; align-content: start; height: 63px; padding: 5px 12px; border-bottom: 1px solid var(--line); }
li:last-child { height: 65px; border: 0; }
li.none { display: flex; justify-content: space-between; height: 39px; padding: 4px 12px; border: 0; }
li.chosen { height: 65px; background: #f1faff; border: 1px solid #879596; padding: 5px 11px; }
.check { position: absolute; right: 12px; top: 21px; width: 22px; height: 22px; }
.callout { position: absolute; z-index: 3; left: -50px; top: -41px; width: 422px; height: 100px; border: 10px solid #cf2626; pointer-events: none; }
.net-body { padding: 67px 27px 27px; height: 400px; }
.subnet { margin-top: 59px; }
.ext-link { display: flex; align-items: center; gap: 6px; }
.label-row { display: flex; align-items: center; height: 30px; margin: 16px 0 5px; }
.label-row.firewall { margin-top: 12px; }
.label-row .info { margin-left: 11px; padding-left: 15px; border-left: 1px solid #d5dbdb; }

/* summary */
.summary { margin-top: 14px; }
.summary-body { padding: 22px 27px 27px; }
.summary .label-row { margin: 0 0 5px; }
hr { margin: 17px 0 21px; border: 0; border-top: 1px solid var(--line); }
dd { margin-top: 3px; }
dd + dt { margin-top: 26px; }
dd.ami { margin-top: 0; font: 16px/22px var(--ui); color: #545b64; }
.alert { display: flex; gap: 11px; margin-top: 27px; padding: 27px; border: 1px solid #2f72c4; border-radius: 2px; background: #f1f8ff; }
.alert p { flex: 1; font-family: var(--ui); }
.alert button { align-self: flex-start; width: 24px; height: 20px; }
.alert svg.blue { color: #2f72c4; }
.actions { display: flex; justify-content: space-between; align-items: flex-start; padding: 27px; border-top: 1px solid #879596; }
.actions div { display: grid; justify-items: center; gap: 11px; }
.actions button { height: 42px; font-weight: 600; }
.cancel { padding: 0 29px; color: #545b64; }
.launch { width: 204px; border-radius: 2px; background: #f29a14; }

.aws-footer { display: flex; align-items: center; height: 40px; padding: 0 21px; background: #252f3e; border-top: 1px solid #545b64; color: #fff; font: 500 16px/30px var(--ui); gap: 34px; }
.aws-footer button { gap: 8px; }
.copy { margin: 0 6px 0 auto; }

/* Windows taskbar */
.taskbar { display: grid; grid-template-columns: 1fr auto 1fr; align-items: center; height: 72px; border-top: 2px solid #494440; background: linear-gradient(90deg, #20201f, #222523 30%, #2b261f 60%, #252524 75%, #30251f 90%, #2a2422); color: #fff; font: 17px/25px var(--ui); }
.weather { display: flex; align-items: center; gap: 8px; padding: 0 0 2px 28px; }
.weather small { font-size: 17px; color: #c9c9c9; }
.apps { display: flex; align-items: center; gap: 6px; padding-left: 2px; }
.app { position: relative; width: 60px; height: 60px; border-radius: 6px; }
.app.red { background: #432629; }
.app.current { background: #383330; }
.app.multi { box-shadow: 5px 0 0 -1px #302624; }
.dot { position: absolute; left: 26px; bottom: 1px; width: 9px; height: 5px; border-radius: 3px; background: #9a9896; }
.dot.pink { background: #ff99a2; }
.dot.wide-dot { left: 18px; width: 24px; background: #f97e60; }
.profile { position: absolute; right: -3px; top: 5px; width: 24px; height: 24px; border-radius: 50%; background: #5c6bc0; font-size: 13px; line-height: 24px; }
.keys { display: flex; flex-wrap: wrap; justify-content: center; gap: 0 2px; width: 36px; }
.keys i { width: 17px; height: 15px; border-radius: 2px; background: #ebe8e7; font: bold 13px/13px "Liberation Sans", sans-serif; color: #e0262c; }
.task-search { display: flex; align-items: center; gap: 14px; width: 330px; height: 48px; padding: 0 4px 0 17px; border: 1px solid #5d5b59; border-radius: 24px; background: #403f3e; font-size: 18px; }
.task-search input { flex: 1; min-width: 0; outline: 0; }
.task-search input::placeholder { color: #cfcfcf; opacity: 1; }
.tray { display: flex; align-items: center; justify-content: flex-end; gap: 24px; padding: 0 30px 2px 0; }
.lang { width: 42px; text-align: center; }
.quick { display: flex; gap: 12px; }
.clock { min-width: 95px; text-align: right; }
.bell { margin-left: -13px; }
.copilot { position: relative; }
.copilot i { position: absolute; left: 8px; bottom: -4px; width: 28px; border-radius: 4px; background: #ffc814; font-size: 11px; font-weight: 700; line-height: 14px; color: #111; text-align: center; }
```
